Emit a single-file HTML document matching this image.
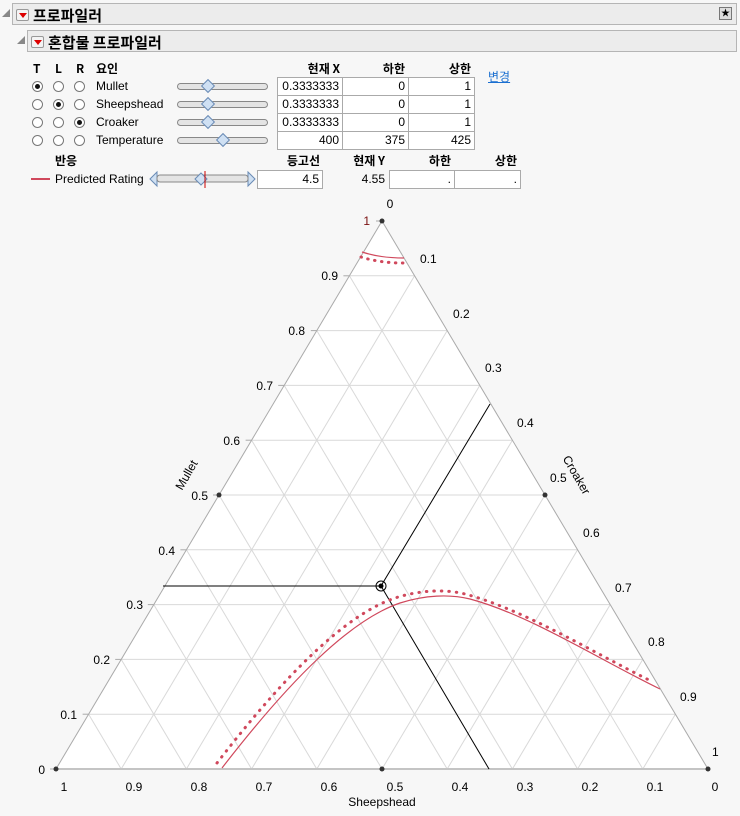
<!DOCTYPE html>
<html><head><meta charset="utf-8">
<style>
*{margin:0;padding:0;box-sizing:border-box}
body{width:740px;height:816px;background:#f7f7f7;font-family:"Liberation Sans","Noto Sans CJK KR",sans-serif;font-size:12px;color:#000;position:relative;overflow:hidden}
.a{position:absolute;white-space:nowrap}
.hdr{position:absolute;background:#ececec;border:1px solid #b5b5b5;height:22px}
.hdr b{position:absolute;left:20px;top:1px;font-size:15px;font-family:"Noto Sans CJK KR",sans-serif;font-weight:bold}
.dd{position:absolute;left:3px;top:5px;width:13px;height:12px;border:1px solid #999;background:#f4f4f4;border-radius:2px}
.dd:after{content:"";position:absolute;left:2px;top:3px;border-left:4px solid transparent;border-right:4px solid transparent;border-top:5px solid #d00}
.tri{position:absolute;width:0;height:0;border-left:8px solid transparent;border-bottom:8px solid #888}
.rad{position:absolute;width:11px;height:11px;border:1px solid #777;border-radius:50%;background:#fff}
.rad.on:after{content:"";position:absolute;left:2px;top:2px;width:5px;height:5px;border-radius:50%;background:#111}
.sl{position:absolute;height:7px;border:1px solid #888;border-radius:4px;background:#e4e4e4}
.th{position:absolute;width:10px;height:10px;background:#cfe0f3;border:1px solid #6a8bb5;transform:rotate(45deg)}
.box{position:absolute;height:19px;border:1px solid #aaa;background:#fff;text-align:right;padding-right:3px;line-height:17px}
.h{position:absolute;font-weight:bold;font-family:"Noto Sans CJK KR","Liberation Sans",sans-serif;font-size:12px;line-height:14px}
</style></head><body>
<div class="tri" style="left:2px;top:9px"></div>
<div class="hdr" style="left:12px;top:3px;width:725px"><div class="dd"></div><b>프로파일러</b>
<div style="position:absolute;right:4px;top:3px;width:13px;height:13px;border:1px solid #777;background:#ddd;font-size:9px;line-height:11px;text-align:center">★</div></div>
<div class="tri" style="left:17px;top:36px"></div>
<div class="hdr" style="left:27px;top:30px;width:710px"><div class="dd"></div><b>혼합물 프로파일러</b></div>

<div class="h" style="left:33px;top:62px">T</div><div class="h" style="left:55px;top:62px">L</div><div class="h" style="left:76px;top:62px">R</div><div class="h" style="left:96px;top:62px">요인</div>
<div class="h" style="left:300px;top:62px;width:40px;text-align:right">현재 X</div>
<div class="h" style="left:370px;top:62px;width:35px;text-align:right">하한</div>
<div class="h" style="left:436px;top:62px;width:35px;text-align:right">상한</div>
<div class="a" style="left:488px;top:68px;color:#1a6fd0;text-decoration:underline;font-family:'Noto Sans CJK KR',sans-serif">변경</div>

<div class="rad on" style="left:32px;top:81px"></div><div class="rad" style="left:53px;top:81px"></div><div class="rad" style="left:74px;top:81px"></div>
<div class="rad" style="left:32px;top:99px"></div><div class="rad on" style="left:53px;top:99px"></div><div class="rad" style="left:74px;top:99px"></div>
<div class="rad" style="left:32px;top:117px"></div><div class="rad" style="left:53px;top:117px"></div><div class="rad on" style="left:74px;top:117px"></div>
<div class="rad" style="left:32px;top:135px"></div><div class="rad" style="left:53px;top:135px"></div><div class="rad" style="left:74px;top:135px"></div>
<div class="a" style="left:96px;top:79px">Mullet</div>
<div class="a" style="left:96px;top:97px">Sheepshead</div>
<div class="a" style="left:96px;top:115px">Croaker</div>
<div class="a" style="left:96px;top:133px">Temperature</div>
<div class="sl" style="left:177px;top:83px;width:91px"></div><div class="th" style="left:203px;top:81px"></div>
<div class="sl" style="left:177px;top:101px;width:91px"></div><div class="th" style="left:203px;top:99px"></div>
<div class="sl" style="left:177px;top:119px;width:91px"></div><div class="th" style="left:203px;top:117px"></div>
<div class="sl" style="left:177px;top:137px;width:91px"></div><div class="th" style="left:218px;top:135px"></div>

<div class="box" style="left:277px;top:77px;width:66px">0.3333333</div><div class="box" style="left:342px;top:77px;width:67px">0</div><div class="box" style="left:408px;top:77px;width:67px">1</div>
<div class="box" style="left:277px;top:95px;width:66px">0.3333333</div><div class="box" style="left:342px;top:95px;width:67px">0</div><div class="box" style="left:408px;top:95px;width:67px">1</div>
<div class="box" style="left:277px;top:113px;width:66px">0.3333333</div><div class="box" style="left:342px;top:113px;width:67px">0</div><div class="box" style="left:408px;top:113px;width:67px">1</div>
<div class="box" style="left:277px;top:131px;width:66px">400</div><div class="box" style="left:342px;top:131px;width:67px">375</div><div class="box" style="left:408px;top:131px;width:67px">425</div>

<div class="h" style="left:55px;top:154px">반응</div>
<div class="h" style="left:280px;top:154px;width:40px;text-align:right">등고선</div>
<div class="h" style="left:345px;top:154px;width:40px;text-align:right">현재 Y</div>
<div class="h" style="left:416px;top:154px;width:35px;text-align:right">하한</div>
<div class="h" style="left:482px;top:154px;width:35px;text-align:right">상한</div>
<div class="a" style="left:31px;top:178px;width:19px;height:2px;background:#d0485c"></div>
<div class="a" style="left:55px;top:172px">Predicted Rating</div>
<svg class="a" style="left:148px;top:170px" width="110" height="18">
<polygon points="2,9 9,2 9,16" fill="#cfe0f3" stroke="#6a8bb5"/><polygon points="107,9 100,2 100,16" fill="#cfe0f3" stroke="#6a8bb5"/>
<rect x="9" y="5" width="91" height="7" rx="3" fill="#e4e4e4" stroke="#888"/>
<polygon points="53,3 59,9 53,15 47,9" fill="#cfe0f3" stroke="#6a8bb5"/>
<line x1="57" y1="1" x2="57" y2="18" stroke="#c00"/></svg>
<div class="box" style="left:257px;top:170px;width:66px">4.5</div>
<div class="a" style="left:345px;top:172px;width:40px;text-align:right">4.55</div>
<div class="box" style="left:389px;top:170px;width:66px">.</div><div class="box" style="left:454px;top:170px;width:67px">.</div>

<svg class="a" style="left:0;top:0" width="740" height="816" font-family="Liberation Sans,sans-serif" font-size="12">
<polygon points="382,221 56,769 708,769" fill="#fff"/>
<g stroke="#d9d9d9" stroke-width="1">
<line x1="88.6" y1="714.2" x2="675.4" y2="714.2"/><line x1="121.2" y1="659.4" x2="642.8" y2="659.4"/><line x1="153.8" y1="604.6" x2="610.2" y2="604.6"/><line x1="186.4" y1="549.8" x2="577.6" y2="549.8"/><line x1="219" y1="495" x2="545" y2="495"/><line x1="251.6" y1="440.2" x2="512.4" y2="440.2"/><line x1="284.2" y1="385.4" x2="479.8" y2="385.4"/><line x1="316.8" y1="330.6" x2="447.2" y2="330.6"/><line x1="349.4" y1="275.8" x2="414.6" y2="275.8"/>
<line x1="121.2" y1="769" x2="414.6" y2="275.8"/><line x1="186.4" y1="769" x2="447.2" y2="330.6"/><line x1="251.6" y1="769" x2="479.8" y2="385.4"/><line x1="316.8" y1="769" x2="512.4" y2="440.2"/><line x1="382" y1="769" x2="545" y2="495"/><line x1="447.2" y1="769" x2="577.6" y2="549.8"/><line x1="512.4" y1="769" x2="610.2" y2="604.6"/><line x1="577.6" y1="769" x2="642.8" y2="659.4"/><line x1="642.8" y1="769" x2="675.4" y2="714.2"/>
<line x1="642.8" y1="769" x2="349.4" y2="275.8"/><line x1="577.6" y1="769" x2="316.8" y2="330.6"/><line x1="512.4" y1="769" x2="284.2" y2="385.4"/><line x1="447.2" y1="769" x2="251.6" y2="440.2"/><line x1="382" y1="769" x2="219" y2="495"/><line x1="316.8" y1="769" x2="186.4" y2="549.8"/><line x1="251.6" y1="769" x2="153.8" y2="604.6"/><line x1="186.4" y1="769" x2="121.2" y2="659.4"/><line x1="121.2" y1="769" x2="88.6" y2="714.2"/>
</g>
<g stroke="#aaa" stroke-width="1">
<line x1="382" y1="221" x2="56" y2="769"/><line x1="382" y1="221" x2="708" y2="769"/>
<line x1="56" y1="769" x2="708" y2="769" stroke="#c4c4c4" stroke-width="2"/>
<line x1="50" y1="769" x2="56" y2="769"/><line x1="82.6" y1="714.2" x2="88.6" y2="714.2"/><line x1="115.2" y1="659.4" x2="121.2" y2="659.4"/><line x1="147.8" y1="604.6" x2="153.8" y2="604.6"/><line x1="180.4" y1="549.8" x2="186.4" y2="549.8"/><line x1="213" y1="495" x2="219" y2="495"/><line x1="245.6" y1="440.2" x2="251.6" y2="440.2"/><line x1="278.2" y1="385.4" x2="284.2" y2="385.4"/><line x1="310.8" y1="330.6" x2="316.8" y2="330.6"/><line x1="343.4" y1="275.8" x2="349.4" y2="275.8"/><line x1="376" y1="221" x2="382" y2="221"/>
</g>
<g stroke="#000" stroke-width="1">
<line x1="163" y1="586" x2="381" y2="586"/><line x1="381" y1="586" x2="490" y2="404"/><line x1="381" y1="586" x2="489" y2="769"/>
</g>
<circle cx="381" cy="586" r="5" fill="none" stroke="#000"/><circle cx="381" cy="586" r="2.5" fill="#000"/>
<g fill="#333"><circle cx="382" cy="221" r="2.5"/><circle cx="56" cy="769" r="2.5"/><circle cx="708" cy="769" r="2.5"/><circle cx="219" cy="495" r="2.5"/><circle cx="545" cy="495" r="2.5"/><circle cx="382" cy="769" r="2.5"/></g>
<g fill="none" stroke="#d0485c">
<path d="M222,768 C290,680 350,620 400,603 C425,595 450,594 470,599 C530,615 600,660 660,689" stroke-width="1.2"/>
<path d="M217,763 C285,675 345,615 395,598 C420,590 445,589 465,594 C525,610 592,652 651,681" stroke-width="3" stroke-dasharray="0.5,7" stroke-linecap="round"/>
<path d="M362,252 Q380,258 404,258" stroke-width="1.2"/>
<path d="M361,257 Q380,263 403,263" stroke-width="3" stroke-dasharray="0.5,6.5" stroke-linecap="round"/>
</g>
<g fill="#000">
<text x="390" y="208" text-anchor="middle">0</text><text x="420" y="263">0.1</text><text x="453" y="318">0.2</text><text x="485" y="372">0.3</text><text x="517" y="427">0.4</text><text x="550" y="482">0.5</text><text x="583" y="537">0.6</text><text x="615" y="592">0.7</text><text x="648" y="646">0.8</text><text x="680" y="701">0.9</text><text x="712" y="756">1</text>
<text x="370" y="225" text-anchor="end" fill="#7a1010">1</text><text x="338" y="280" text-anchor="end">0.9</text><text x="305" y="335" text-anchor="end">0.8</text><text x="273" y="390" text-anchor="end">0.7</text><text x="240" y="445" text-anchor="end">0.6</text><text x="208" y="500" text-anchor="end">0.5</text><text x="175" y="555" text-anchor="end">0.4</text><text x="143" y="609" text-anchor="end">0.3</text><text x="110" y="664" text-anchor="end">0.2</text><text x="77" y="719" text-anchor="end">0.1</text><text x="45" y="774" text-anchor="end">0</text>
<text x="64" y="791" text-anchor="middle">1</text><text x="134" y="791" text-anchor="middle">0.9</text><text x="199" y="791" text-anchor="middle">0.8</text><text x="264" y="791" text-anchor="middle">0.7</text><text x="329" y="791" text-anchor="middle">0.6</text><text x="395" y="791" text-anchor="middle">0.5</text><text x="460" y="791" text-anchor="middle">0.4</text><text x="525" y="791" text-anchor="middle">0.3</text><text x="590" y="791" text-anchor="middle">0.2</text><text x="655" y="791" text-anchor="middle">0.1</text><text x="715" y="791" text-anchor="middle">0</text>
<text x="382" y="806" text-anchor="middle">Sheepshead</text>
<text transform="translate(190,477) rotate(-60)" text-anchor="middle">Mullet</text>
<text transform="translate(573,477) rotate(60)" text-anchor="middle">Croaker</text>
</g>
</svg>
</body></html>
